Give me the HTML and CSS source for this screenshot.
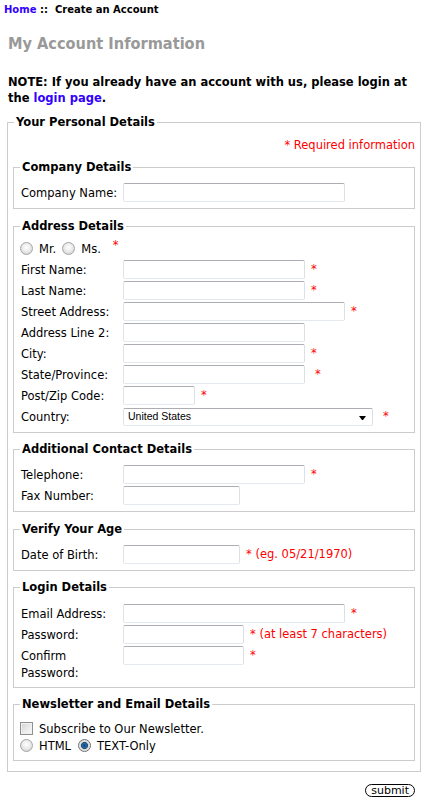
FILE: index.html
```html
<!DOCTYPE html>
<html>
<head>
<meta charset="utf-8">
<title>Create an Account</title>
<link rel="stylesheet" href="styles.css">
</head>
<body>
<div class="crumb"><a href="#" class="link">Home</a> ::&nbsp; Create an Account</div>
<h1 class="title">My Account Information</h1>
<p class="note">NOTE: If you already have an account with us, please login at<br>the <a class="link" href="#">login page</a>.</p>
<form class="form">
  <fieldset class="outer">
    <legend class="outer-legend">Your Personal Details</legend>
    <div class="req">* Required information</div>

    <fieldset class="sub first">
      <legend class="sub-legend">Company Details</legend>
      <div class="rows">
        <label class="lbl">Company Name:</label>
        <div class="val"><input class="in w222" type="text"></div>
      </div>
    </fieldset>

    <fieldset class="sub gap10">
      <legend class="sub-legend">Address Details</legend>
      <div class="radio-row">
        <input type="radio" name="g" class="radio"><span class="opt">Mr.</span>
        <input type="radio" name="g" class="radio"><span class="opt">Ms.</span>
        <span class="ast ast-g">*</span>
      </div>
      <div class="rows">
        <label class="lbl">First Name:</label>
        <div class="val"><input class="in w182" type="text"><span class="ast">*</span></div>
        <label class="lbl">Last Name:</label>
        <div class="val"><input class="in w182" type="text"><span class="ast">*</span></div>
        <label class="lbl">Street Address:</label>
        <div class="val"><input class="in w222" type="text"><span class="ast">*</span></div>
        <label class="lbl">Address Line 2:</label>
        <div class="val"><input class="in w182" type="text"></div>
        <label class="lbl">City:</label>
        <div class="val"><input class="in w182" type="text"><span class="ast">*</span></div>
        <label class="lbl">State/Province:</label>
        <div class="val"><input class="in w182" type="text"><span class="ast ast-state">*</span></div>
        <label class="lbl">Post/Zip Code:</label>
        <div class="val"><input class="in w72" type="text"><span class="ast">*</span></div>
        <label class="lbl">Country:</label>
        <div class="val">
          <span class="select-wrap">
            <select class="sel"><option>United States</option></select>
            <svg class="arrow" width="8" height="5" viewBox="0 0 8 5"><polygon points="0,0 7,0 4,4 3,4" fill="#000"/></svg>
          </span>
          <span class="ast ast-far">*</span>
        </div>
      </div>
    </fieldset>

    <fieldset class="sub">
      <legend class="sub-legend">Additional Contact Details</legend>
      <div class="rows">
        <label class="lbl">Telephone:</label>
        <div class="val"><input class="in w182" type="text"><span class="ast">*</span></div>
        <label class="lbl">Fax Number:</label>
        <div class="val"><input class="in w117" type="text"></div>
      </div>
    </fieldset>

    <fieldset class="sub gap10">
      <legend class="sub-legend">Verify Your Age</legend>
      <div class="rows">
        <label class="lbl">Date of Birth:</label>
        <div class="val"><input class="in w117" type="text"><span class="ast">* (eg. 05/21/1970)</span></div>
      </div>
    </fieldset>

    <fieldset class="sub loose login">
      <legend class="sub-legend">Login Details</legend>
      <div class="rows">
        <label class="lbl">Email Address:</label>
        <div class="val"><input class="in w222" type="text"><span class="ast">*</span></div>
        <label class="lbl">Password:</label>
        <div class="val"><input class="in w121" type="password"><span class="ast">* (at least 7 characters)</span></div>
        <label class="lbl lbl-two">Confirm<br>Password:</label>
        <div class="val val-top"><input class="in w121" type="password"><span class="ast">*</span></div>
      </div>
    </fieldset>

    <fieldset class="sub loose">
      <legend class="sub-legend">Newsletter and Email Details</legend>
      <div class="check-row">
        <input type="checkbox" class="check"><span class="opt">Subscribe to Our Newsletter.</span>
      </div>
      <div class="check-row">
        <input type="radio" name="fmt" class="radio"><span class="opt opt-wide">HTML</span>
        <input type="radio" name="fmt" class="radio" checked><span class="opt">TEXT-Only</span>
      </div>
    </fieldset>
  </fieldset>

  <div class="actions"><button type="button" class="submit">submit</button></div>
</form>
</body>
</html>
```

FILE: styles.css
```css
html, body {
  margin: 0;
  padding: 0;
  background: #fff;
}

body {
  font-family: "DejaVu Sans", Verdana, sans-serif;
  font-size: 11.5px;
  line-height: 17px;
  color: #000;
}

.link {
  color: #3300ff;
  text-decoration: none;
}

.crumb {
  padding: 3px 0 0 4px;
  font-weight: bold;
  font-size: 10px;
  line-height: 14px;
}

.title {
  margin: 17px 0 0 8px;
  font-family: "DejaVu Sans Condensed", "DejaVu Sans", sans-serif;
  font-stretch: condensed;
  font-weight: bold;
  font-size: 16.2px;
  line-height: 20px;
  color: #999;
}

.note {
  margin: 20px 0 0 8px;
  font-weight: bold;
  font-size: 11.5px;
  line-height: 16px;
}

.form {
  margin: 0;
}

.outer {
  margin: 9px 4px 0 7px;
  padding: 0 5px 10px;
  border: 1px solid #ccc;
  min-width: 0;
}

.outer-legend,
.sub-legend {
  font-weight: bold;
  font-size: 11.5px;
  line-height: 14px;
  padding: 0 2px;
}

.outer-legend {
  margin-left: 1px;
}

.sub-legend {
  margin-left: -1px;
}

.req {
  margin-top: 9px;
  text-align: right;
  color: #f00;
  line-height: 14px;
}

.sub {
  margin: 9px 0 0;
  padding: 8px 8px 5px 7px;
  border: 1px solid #ccc;
  min-width: 0;
}

.sub.first {
  margin-top: 8px;
}

.sub.gap10 {
  margin-top: 10px;
}

.sub.loose {
  padding-top: 9px;
  padding-bottom: 6px;
}

.sub.login {
  padding-bottom: 5px;
}

.rows {
  display: grid;
  grid-template-columns: 102px 1fr;
  grid-auto-rows: minmax(21px, auto);
  align-items: center;
}

.lbl {
  line-height: 17px;
  padding-top: 2px;
}

.lbl-two {
  align-self: start;
  padding-top: 3px;
}

.val {
  display: flex;
  align-items: center;
  height: 21px;
}

.val-top {
  align-self: start;
}

.in {
  box-sizing: border-box;
  height: 19px;
  margin: 0;
  padding: 0 3px;
  border: 1px solid;
  border-color: #abadb3 #dbdfe6 #e3e9ef #e2e3ea;
  border-radius: 2px;
  background: #fff;
  font: 11px "DejaVu Sans", sans-serif;
}

.w222 { width: 222px; }
.w182 { width: 182px; }
.w121 { width: 121px; }
.w117 { width: 117px; }
.w72 { width: 72px; }

.ast {
  color: #f00;
  margin-left: 6px;
  white-space: nowrap;
}

.ast-state {
  margin-left: 10px;
}

.ast-far {
  margin-left: 10px;
}

.ast-g {
  margin-left: 5px;
  align-self: flex-start;
  line-height: 14px;
}

.select-wrap {
  position: relative;
  display: block;
  width: 250px;
  height: 18px;
}

.sel {
  -webkit-appearance: none;
  appearance: none;
  box-sizing: border-box;
  width: 250px;
  height: 18px;
  margin: 0;
  padding: 0 0 1px 4px;
  border: 1px solid;
  border-color: #abadb3 #dbdfe6 #e3e9ef #e2e3ea;
  border-radius: 2px;
  background: #fff;
  color: #000;
  font-family: "Liberation Sans", Arial, sans-serif;
  font-size: 10.5px;
}

.arrow {
  position: absolute;
  right: 6px;
  top: 8px;
}

.radio-row {
  display: flex;
  align-items: center;
  height: 21px;
  margin-top: -3px;
}

.check-row {
  display: flex;
  align-items: center;
  height: 17px;
}

.radio {
  -webkit-appearance: none;
  appearance: none;
  box-sizing: border-box;
  width: 13px;
  height: 13px;
  margin: 0 6px 0 -1px;
  border: 1px solid #a5a5a5;
  border-radius: 50%;
  background: radial-gradient(circle at 50% 40%, #ffffff 0, #ececec 45%, #c9c9c9 100%);
}

.radio:checked {
  border-color: #707070;
  background: radial-gradient(circle at 50% 50%, #0d3f6e 0, #1f6fb0 2px, #2a4f70 3.2px, #d6d6d6 3.8px, #f2f2f2 6px);
}

.opt {
  margin-right: 7px;
  padding-top: 2px;
}

.opt-wide {
  margin-right: 8px;
}

.check {
  -webkit-appearance: none;
  appearance: none;
  box-sizing: border-box;
  width: 13px;
  height: 13px;
  margin: 0 6px 0 -1px;
  border: 1px solid #8e8f8f;
  background: linear-gradient(135deg, #d2d2d2 0, #ededed 60%, #fafafa 100%);
  box-shadow: inset 0 0 0 1px #f2f2f2;
}

.actions {
  display: flex;
  justify-content: flex-end;
  padding: 12px 10px 0 0;
}

.submit {
  box-sizing: border-box;
  height: 13px;
  margin: 0;
  padding: 0 5px;
  border: 1px solid #000;
  border-radius: 7px;
  background: #fff;
  color: #000;
  font-family: "DejaVu Sans", Verdana, sans-serif;
  font-size: 11px;
  line-height: 11px;
}
```
